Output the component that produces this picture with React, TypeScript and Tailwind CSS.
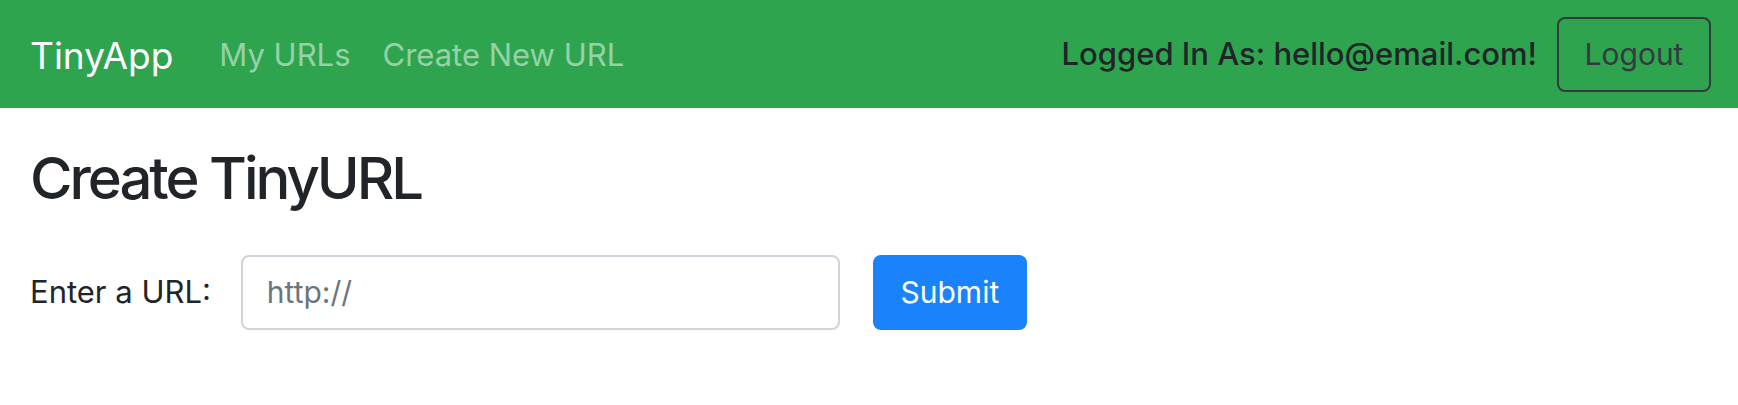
export default function App() {
  return (
    <div className="min-h-[405px] bg-white font-['Inter','Liberation_Sans',sans-serif] text-[#212529]">
      <nav className="flex h-[108px] items-center justify-between bg-[#2ea44f] pl-[30px] pr-[27px]">
        <div className="flex items-center pt-[2px]">
          <a className="mr-[30px] text-[37px] leading-none text-white">TinyApp</a>
          <a className="px-[16px] text-[31px] text-white/50">My URLs</a>
          <a className="px-[16px] text-[31px] text-white/50">Create New URL</a>
        </div>
        <div className="flex items-center gap-[20px]">
          <span className="text-[31px] font-medium text-[#212529]">Logged In As: hello@email.com!</span>
          <button className="flex h-[75px] w-[154px] items-center justify-center rounded-[8px] border-2 border-[#343a40] text-[30px] text-[#343a40]">
            Logout
          </button>
        </div>
      </nav>
      <main className="px-[30px]">
        <h2 className="mt-[36px] text-[58px] font-medium leading-[1.2] tracking-[-0.052em]">Create TinyURL</h2>
        <form className="mt-[41px] flex items-center">
          <label className="text-[31px]">Enter a URL:</label>
          <input
            className="ml-[30px] h-[75px] w-[599px] rounded-[8px] border-2 border-[#ced4da] px-[24px] text-[30px] placeholder:text-[#6c757d]"
            placeholder="http://"
          />
          <button className="ml-[33px] h-[75px] w-[154px] rounded-[8px] bg-[#1a82fb] text-[30px] text-white">
            Submit
          </button>
        </form>
      </main>
    </div>
  );
}
